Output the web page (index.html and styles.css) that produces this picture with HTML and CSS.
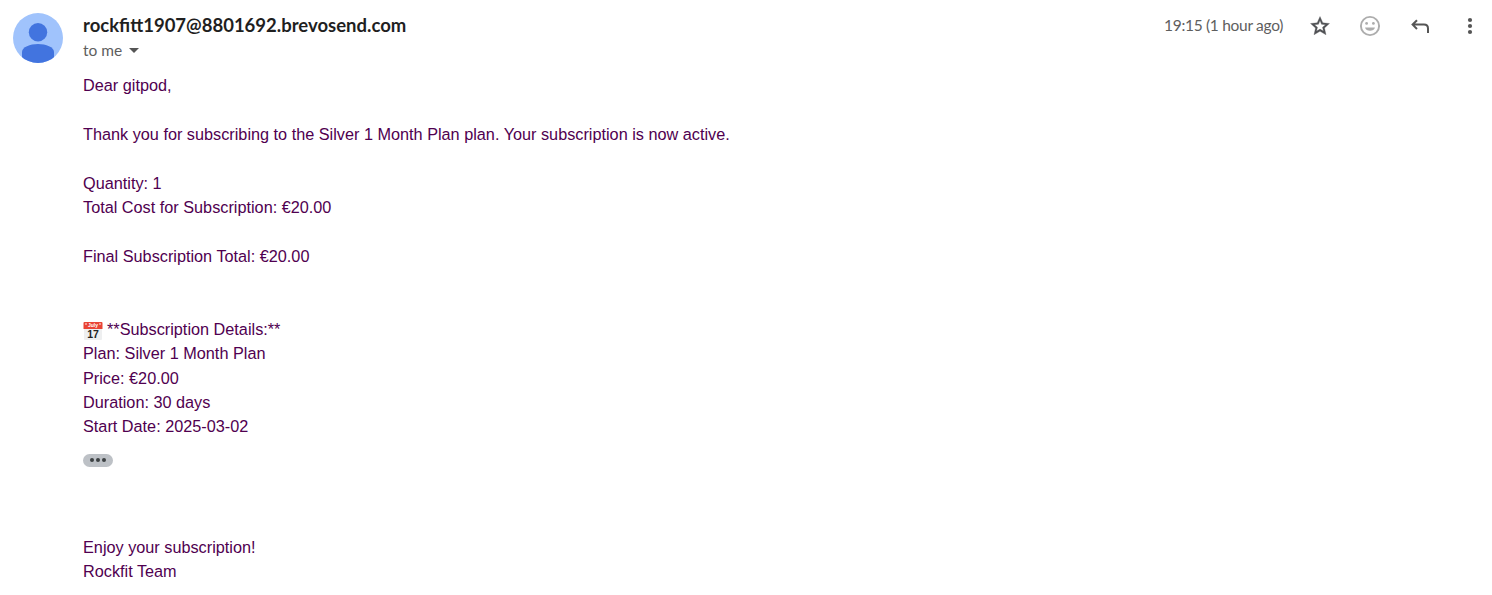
FILE: index.html
```html
<!DOCTYPE html>
<html lang="en">
<head>
<meta charset="utf-8">
<title>Message</title>
<link rel="stylesheet" href="styles.css">
</head>
<body>
<article class="message">
  <svg class="avatar" viewBox="0 0 50 50" aria-hidden="true">
    <defs><clipPath id="disc"><circle cx="25" cy="25" r="25"/></clipPath></defs>
    <g clip-path="url(#disc)">
      <rect width="50" height="50" fill="#a0c3fc"/>
      <circle cx="25" cy="19.3" r="9.2" fill="#4274df"/>
      <path d="M9 50V39c0-5 8-8 16-8s16 3 16 8v11z" fill="#4274df"/>
    </g>
  </svg>
  <div class="content">
    <header class="header">
      <div class="people">
        <h1 class="sender">rockfitt1907@8801692.brevosend.com</h1>
        <div class="recipient"><span class="to">to me</span><svg class="caret" viewBox="0 0 10 5"><path d="M0 0h10L5 5z" fill="#555"/></svg></div>
      </div>
      <div class="tools">
        <time class="date">19:15 (1 hour ago)</time>
        <svg class="icon" viewBox="0 0 24 24"><path fill="#505255" stroke="#505255" stroke-width=".3" d="M21.500 9.500l-6.700-.7L12 2.500 9.190 8.800 2.500 9.500l5 4.470L6 20.800 12 17.270 18 20.800l-1.500-6.830zM12 15.100l-3.400 2 .9-3.800-3-2.600 4-.4L12 6.600l1.500 3.700 4 .4-3 2.600.9 3.800z"/></svg>
        <svg class="icon" viewBox="0 0 24 24" fill="none" stroke="#adadad"><circle cx="12" cy="12" r="9.1" stroke-width="1.9"/><g fill="#adadad" stroke="none"><circle cx="8.600" cy="9.400" r="1.400"/><circle cx="15.400" cy="9.400" r="1.400"/><path d="M7 13.400h10c-.6 2.200-2.600 3.300-5 3.300s-4.400-1.100-5-3.300z"/></g></svg>
        <svg class="icon" viewBox="0 0 24 24" fill="none" stroke="#555" stroke-width="2"><path d="M9 6.200L4.600 10.600l4.400 4.400M4.600 10.600H16c2.700 0 4 1.500 4 4V19"/></svg>
        <svg class="icon" viewBox="0 0 24 24" fill="#555"><circle cx="12" cy="6" r="2.100"/><circle cx="12" cy="12" r="2.100"/><circle cx="12" cy="18" r="2.100"/></svg>
      </div>
    </header>
    <div class="body">
      <p>Dear gitpod,</p>
      <p>Thank you for subscribing to the Silver 1 Month Plan plan. Your subscription is now active.</p>
      <p>Quantity: 1<br>Total Cost for Subscription: €20.00</p>
      <p class="total">Final Subscription Total: €20.00</p>
      <p><svg class="calendar" viewBox="0 0 20 18"><path d="M1 6h18v11q0 1-1 1H2q-1 0-1-1z" fill="#eeeff0"/><path d="M.5 1q0-1 1-1h17q1 0 1 1v6H.5z" fill="#e94435"/><g fill="#fff"><circle cx="3" cy="2" r=".8"/><circle cx="17" cy="2" r=".8"/></g><text class="month" x="10" y="5">July</text><text class="day" x="10" y="16">17</text></svg>**Subscription Details:**<br>Plan: Silver 1 Month Plan<br>Price: €20.00<br>Duration: 30 days<br>Start Date: 2025-03-02</p>
    </div>
    <div class="trim"><i class="dot"></i><i class="dot"></i><i class="dot"></i></div>
    <div class="body closing"><p>Enjoy your subscription!<br>Rockfit Team</p></div>
  </div>
</article>
</body>
</html>
```
FILE: styles.css
```css
body { margin: 0; background: #fff; }
.message { display: flex; gap: 20px; padding: 13px 10px 0 13px; height: 582px; box-sizing: border-box; }
.avatar { width: 50px; height: 50px; flex: none; }
.content { flex: 1; }
.header { display: flex; justify-content: space-between; height: 60.400px; font-family: Lato, sans-serif; }
.sender { margin: 0; font-size: 18.500px; line-height: 24px; font-weight: 700; color: #1f1f1f; white-space: nowrap; }
.recipient { display: flex; align-items: center; gap: 7px; height: 25px; font-size: 15.500px; color: #5e5e5e; }
.caret { width: 10px; height: 5px; margin-top: 2px; }
.tools { display: flex; align-items: center; height: 25px; gap: 26px; }
.date { font-size: 15.500px; letter-spacing: -.3px; color: #5e5e5e; white-space: nowrap; margin: -2px -1px 0 0; }
.icon { width: 24px; height: 24px; }
.body { font: 16.250px/24.360px "Liberation Sans", Arial, sans-serif; color: #500050; }
.body p { margin: 0 0 24.360px; }
.body .total { margin-bottom: 48.720px; }
.calendar { width: 20px; height: 18px; margin-right: 4px; vertical-align: -5px; }
.month { font: bold 5px "Liberation Sans", sans-serif; fill: #fff; text-anchor: middle; }
.day { font: bold 10.500px "Liberation Sans", sans-serif; fill: #222; text-anchor: middle; }
.trim { display: flex; align-items: center; justify-content: center; gap: 2px; width: 30px; height: 13px; margin-top: -9.300px; border-radius: 7px; background: #bdc1c6; }
.dot { width: 4px; height: 4px; border-radius: 50%; background: #3c4043; }
.closing { margin-top: 68px; }
```
